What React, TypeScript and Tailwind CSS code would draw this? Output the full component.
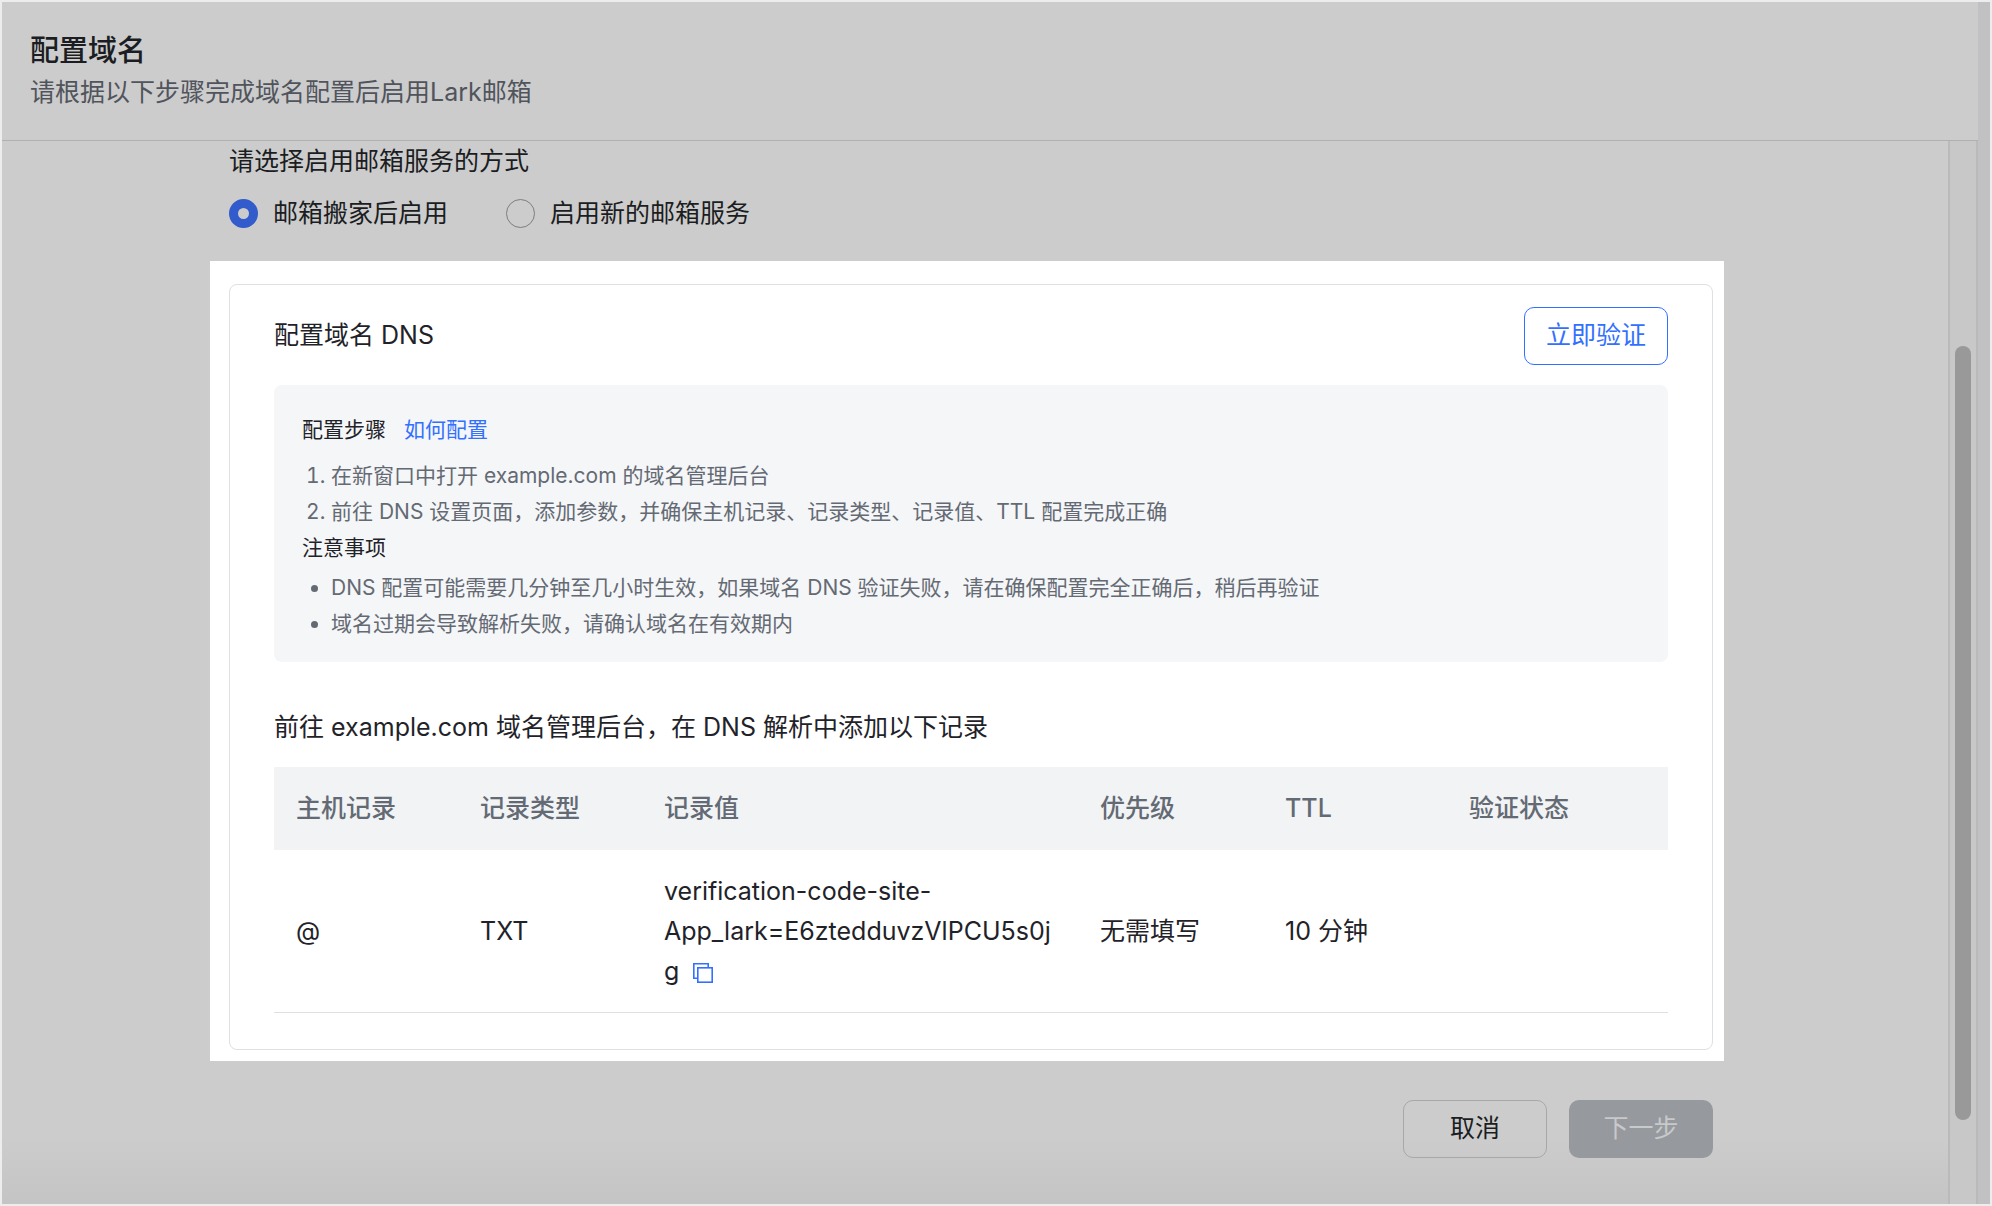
import React from 'react';

const steps = [
  '在新窗口中打开 example.com 的域名管理后台',
  '前往 DNS 设置页面，添加参数，并确保主机记录、记录类型、记录值、TTL 配置完成正确',
];

const notes = [
  'DNS 配置可能需要几分钟至几小时生效，如果域名 DNS 验证失败，请在确保配置完全正确后，稍后再验证',
  '域名过期会导致解析失败，请确认域名在有效期内',
];

const headers = ['主机记录', '记录类型', '记录值', '优先级', 'TTL', '验证状态'];

const CopyIcon = () => (
  <svg className="h-5 w-5" viewBox="0 0 20 20" fill="none" stroke="currentColor" strokeWidth="1.6" aria-hidden="true">
    <path d="M4.5 15.2H0.8V0.8h14.4V4.5" />
    <rect x="4.8" y="4.8" width="14.4" height="14.4" />
  </svg>
);

const Header = () => (
  <header className="h-[139px] border-b border-[#b0b0b0] px-7 pt-[29px] text-[#1b1d22]">
    <h1 className="text-[29px] leading-10 font-medium">配置域名</h1>
    <p className="mt-[3px] text-[25px] leading-9 text-[#50545c]">请根据以下步骤完成域名配置后启用Lark邮箱</p>
  </header>
);

const ModePicker = () => (
  <fieldset className="px-[19px] text-[#1b1d22]">
    <legend className="pt-[2px] leading-9">请选择启用邮箱服务的方式</legend>
    <div className="mt-4 flex gap-[58px] leading-9">
      <label className="flex items-center gap-[15px]">
        <input
          type="radio"
          name="mode"
          defaultChecked
          className="h-[29px] w-[29px] appearance-none rounded-full border border-[#7b7d81] checked:border-[9px] checked:border-[#325bcb]"
        />
        邮箱搬家后启用
      </label>
      <label className="flex items-center gap-[15px]">
        <input
          type="radio"
          name="mode"
          className="h-[29px] w-[29px] appearance-none rounded-full border border-[#7b7d81] checked:border-[9px] checked:border-[#325bcb]"
        />
        启用新的邮箱服务
      </label>
    </div>
  </fieldset>
);

const Guide = () => (
  <div className="mt-5 rounded-lg bg-[#f5f6f8] px-7 pt-[27px] pb-5 text-[21px] leading-9 text-[#646a73]">
    <div className="flex gap-[18px]">
      <h3 className="text-[#1f2329]">配置步骤</h3>
      <a href="#how" className="text-[#3370ff]">如何配置</a>
    </div>
    <ol className="mt-[10px] list-decimal pl-[29px]">
      {steps.map((step) => (
        <li key={step}>{step}</li>
      ))}
    </ol>
    <h3 className="text-[#1f2329]">注意事项</h3>
    <ul className="mt-1 list-disc pl-[29px]">
      {notes.map((note) => (
        <li key={note}>{note}</li>
      ))}
    </ul>
  </div>
);

const RecordTable = () => (
  <table className="mt-[22px] w-full table-fixed border-b border-[#dee0e3] text-left">
    <colgroup>
      <col className="w-[184px]" />
      <col className="w-[184px]" />
      <col className="w-[436px]" />
      <col className="w-[185px]" />
      <col className="w-[184px]" />
      <col />
    </colgroup>
    <thead className="bg-[#f1f3f5] text-[#646a73]">
      <tr>
        {headers.map((header) => (
          <th key={header} scope="col" className="h-[83px] px-[22px] font-medium">{header}</th>
        ))}
      </tr>
    </thead>
    <tbody>
      <tr className="leading-10">
        <td className="px-[22px]">@</td>
        <td className="px-[22px]">TXT</td>
        <td className="px-[22px] py-[21px] wrap-anywhere">
          verification-code-site-App_lark=E6ztedduvzVlPCU5s0jg
          <button type="button" aria-label="复制" className="ml-[14px] align-middle text-[#3370ff]">
            <CopyIcon />
          </button>
        </td>
        <td className="px-[22px]">无需填写</td>
        <td className="px-[22px]">10 分钟</td>
        <td className="px-[22px]"></td>
      </tr>
    </tbody>
  </table>
);

const App = () => {
  return (
    <div
      lang="zh-CN"
      className="flex min-h-screen border-2 border-[#ededed] bg-[#c1c1c3] pr-3 font-['Inter','Noto_Sans_CJK_SC',sans-serif] text-[25px]"
    >
      <div className="flex flex-1 flex-col bg-[#cccccc]">
        <Header />
        <div className="flex flex-1">
          <main className="flex-1 bg-linear-to-t from-[#c4c4c4] to-[#cccccc] to-6% pr-[224px] pb-10 pl-[208px]">
            <ModePicker />
            <section className="mt-[30px] bg-white pt-[23px] pr-[11px] pb-[11px] pl-[19px] text-[#1f2329]">
              <div className="rounded-lg border border-[#dee0e3] px-11 pt-[22px] pb-9">
                <div className="flex items-center justify-between">
                  <h2>配置域名 DNS</h2>
                  <button
                    type="button"
                    className="h-[58px] w-36 rounded-[10px] border border-[#3370ff] text-[#3370ff]"
                  >
                    立即验证
                  </button>
                </div>
                <Guide />
                <p className="mt-[47px] leading-9">前往 example.com 域名管理后台，在 DNS 解析中添加以下记录</p>
                <RecordTable />
              </div>
            </section>
            <div className="mt-[39px] flex justify-end gap-[22px] pr-[11px]">
              <button type="button" className="h-[58px] w-36 rounded-[10px] border border-[#a6a8ab] text-[#1b1d22]">
                取消
              </button>
              <button type="button" disabled className="h-[58px] w-36 rounded-[10px] bg-[#96999e] text-[#c8c9ca]">
                下一步
              </button>
            </div>
          </main>
          <div className="flex w-[30px] justify-center border-x-2 border-[#bababa] bg-[#c8c8c8] pt-[205px] pb-[84px]">
            <div className="w-4 rounded-full bg-[#999999]"></div>
          </div>
        </div>
      </div>
    </div>
  );
};

export default App;
